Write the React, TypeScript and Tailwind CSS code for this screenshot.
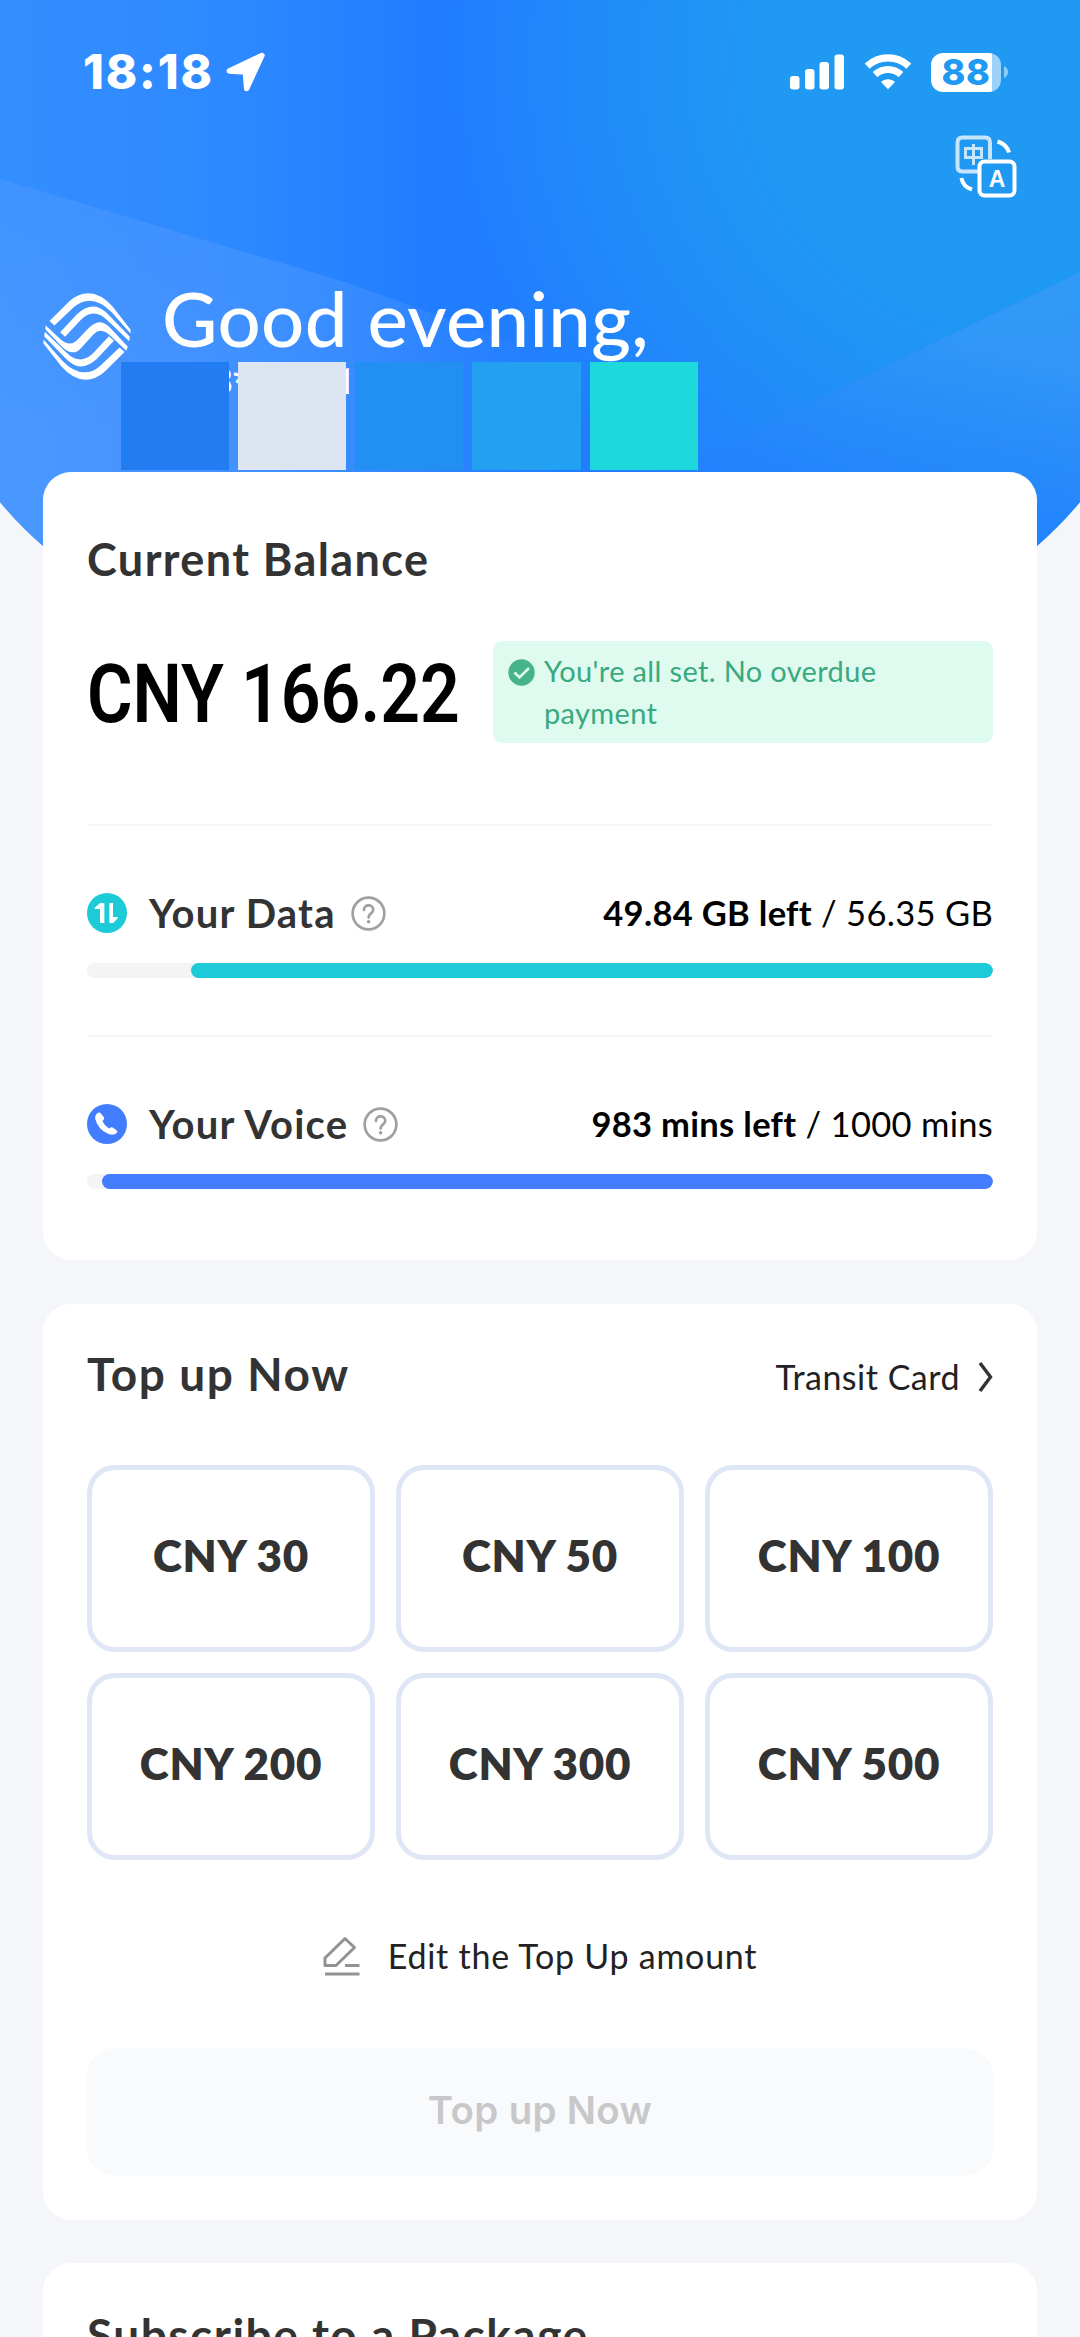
import React from 'react';
import clsx from 'clsx';

const swatches = ['bg-[#237df2]', 'bg-[#dce5f1]', 'bg-[#228ff2]', 'bg-[#22a1f2]', 'bg-[#1ed9db]'];

const amounts = [30, 50, 100, 200, 300, 500];

function HeaderBackground() {
  return (
    <svg className="absolute inset-x-0 top-0" width="1080" height="620" viewBox="0 0 1080 620">
      <defs>
        <linearGradient id="base" x1="0" y1="0" x2="1" y2="0">
          <stop offset="0" stopColor="#338eff" />
          <stop offset="0.22" stopColor="#2d89ff" />
          <stop offset="0.4" stopColor="#207dff" />
          <stop offset="1" stopColor="#247fff" />
        </linearGradient>
        <radialGradient id="glow" gradientUnits="userSpaceOnUse" cx="1010" cy="60" r="570">
          <stop offset="0" stopColor="#2099f3" />
          <stop offset="0.42" stopColor="#2099f3" />
          <stop offset="0.7" stopColor="#2099f3" stopOpacity="0.55" />
          <stop offset="1" stopColor="#2099f3" stopOpacity="0" />
        </radialGradient>
        <linearGradient id="wedgeLeft" gradientUnits="userSpaceOnUse" x1="0" y1="300" x2="560" y2="300">
          <stop offset="0" stopColor="#4a98ff" />
          <stop offset="0.35" stopColor="#4592ff" />
          <stop offset="1" stopColor="#4592ff" stopOpacity="0" />
        </linearGradient>
        <linearGradient id="wedgeShade" gradientUnits="userSpaceOnUse" x1="0" y1="170" x2="0" y2="430">
          <stop offset="0" stopColor="#338eff" stopOpacity="0.9" />
          <stop offset="1" stopColor="#338eff" stopOpacity="0" />
        </linearGradient>
        <linearGradient id="wedgeRight" gradientUnits="userSpaceOnUse" x1="940" y1="330" x2="900" y2="500">
          <stop offset="0" stopColor="#3a99f8" stopOpacity="0.65" />
          <stop offset="1" stopColor="#2380ff" stopOpacity="0.4" />
        </linearGradient>
        <clipPath id="arc">
          <path d="M0 0H1080V502Q1062 524 1037 546Q800 620 540 620Q280 620 43 546Q18 524 0 502Z" />
        </clipPath>
      </defs>
      <g clipPath="url(#arc)">
        <rect width="1080" height="620" fill="url(#base)" />
        <rect width="1080" height="620" fill="url(#glow)" />
        <path d="M0 179L345 282L600 374V620H0Z" fill="url(#wedgeLeft)" />
        <path d="M0 179L345 282L345 430H0Z" fill="url(#wedgeShade)" opacity="0.5" />
        <path d="M1080 272L700 457V620H1080Z" fill="url(#wedgeRight)" />
      </g>
    </svg>
  );
}

function LocationArrow() {
  return (
    <svg width="40" height="40" viewBox="466 68 120 120" fill="#fff" stroke="#fff" strokeWidth="16" strokeLinejoin="round">
      <path d="M574 78L476 125L524 128L528 178Z" />
    </svg>
  );
}

function Signal() {
  return (
    <svg width="54" height="36" viewBox="0 0 54 36" fill="#fff">
      <rect x="0" y="22" width="9.5" height="13.5" rx="3" />
      <rect x="15" y="15" width="9.5" height="20.5" rx="3" />
      <rect x="29.5" y="8" width="9.5" height="27.5" rx="3" />
      <rect x="44.5" y="0.5" width="9.5" height="35" rx="3" />
    </svg>
  );
}

function Wifi() {
  return (
    <svg width="48" height="36" viewBox="0 0 48 36" fill="none" stroke="#fff">
      <path d="M3.2 12.2C15 1.2 33 1.2 44.8 12.2" strokeWidth="7.2" />
      <path d="M11 20.6C18.5 13.8 29.5 13.8 37 20.6" strokeWidth="7" />
      <path d="M17 28C21 24.2 27 24.2 31 28L24 35.2Z" fill="#fff" stroke="none" />
    </svg>
  );
}

function Battery() {
  return (
    <div className="flex items-center">
      <div className="flex h-[39px] w-[70px] items-center justify-center rounded-[12px] bg-linear-to-r from-white from-[87%] to-white/55 to-[87%] font-['Inter'] text-[36px] leading-[39px] font-extrabold tracking-[0.5px] text-[#2099f3]">
        88
      </div>
      <svg className="ml-[3px]" width="4" height="12" viewBox="0 0 4 12">
        <path d="M0 0Q4 2 4 6Q4 10 0 12Z" fill="#fff" opacity="0.5" />
      </svg>
    </div>
  );
}

function TranslateIcon() {
  return (
    <svg width="62" height="64" viewBox="0 0 62 64" fill="none" stroke="#fff" strokeWidth="4">
      <g opacity="0.75">
        <path d="M23 36.5H7.5Q2.5 36.5 2.5 31.5V7.5Q2.5 2.5 7.5 2.5H30Q35 2.5 35 7.5V24" />
        <path d="M10.5 13.5H26.5V22.5H10.5ZM18.5 9V30" strokeWidth="3" />
      </g>
      <rect x="24.5" y="26.5" width="35" height="34" rx="5" />
      <text x="42" y="51.5" textAnchor="middle" fill="#fff" stroke="none" className="font-['Liberation_Sans'] text-[23px] font-bold">
        A
      </text>
      <path d="M42.5 6.5Q51.5 9 54 17.5" />
      <path d="M6.5 43Q8 52 17 54.5" />
    </svg>
  );
}

function Logo() {
  return (
    <svg width="88" height="87" viewBox="39 67 264 262" fill="#fff">
      <path id="outer" d="M58 151L118 92Q145 68 175 68Q212 68 248 108L302 177V189L246 126Q212 90 178 90Q153 90 130 111L73 165Z" />
      <path id="inner" d="M90 185L140 132Q165 108 190 108Q213 108 238 135L300 199L298 212L233 150Q213 129 190 129Q170 130 152 148L105 199Z" />
      <path d="M46 164L92 207Q119 230 141 209L168 181Q190 154 212 155Q228 157 248 179L294 229L289 241L245 199Q214 167 191 191L152 234Q128 260 95 228L46 177Z" />
      <g transform="rotate(180 171 198)">
        <use href="#outer" />
        <use href="#inner" />
      </g>
    </svg>
  );
}

function HelpIcon() {
  return (
    <svg width="35" height="35" viewBox="0 0 34 34" fill="none" stroke="#a0a0a0" strokeWidth="2.6">
      <circle cx="17" cy="17" r="15.4" />
      <path d="M12.6 13.6C12.6 7.6 21.6 7.8 21.6 13.4C21.6 17 17.1 16.8 17.1 21" strokeLinecap="round" />
      <circle cx="17.1" cy="25" r="1.7" fill="#a0a0a0" stroke="none" />
    </svg>
  );
}

function DataIcon() {
  return (
    <svg width="40" height="40" viewBox="0 0 40 40">
      <circle cx="20" cy="20" r="20" fill="#1ccad8" />
      <path d="M13 30V16H8.2Q7 16 7.8 14.8L12.4 10.4Q13 10 14 10H17.4V30ZM22.4 10H26V24H30.2Q31.4 24 30.6 25.4L26.6 29.4Q26 30 25 30H22.4Z" fill="#fff" />
    </svg>
  );
}

function VoiceIcon() {
  return (
    <svg width="40" height="40" viewBox="0 0 40 40">
      <circle cx="20" cy="20" r="20" fill="#427cff" />
      <path d="M11 8.8Q12.6 7.8 14 9.4L17 13.4Q17.8 14.8 16.4 16L15.4 17Q17.4 21.6 22 24.6L23.6 23.6Q25 22.8 26.2 23.8L29.8 26.6Q31 27.8 29.8 29Q26.4 32 21 29.8Q11.4 25.6 8.4 15.4Q7.4 11 11 8.8Z" fill="#fff" />
    </svg>
  );
}

function CheckIcon() {
  return (
    <svg width="27" height="27" viewBox="0 0 27 27">
      <circle cx="13.5" cy="13.5" r="13.2" fill="#47b38b" />
      <path d="M6.5 13.5L11.5 18.5L21 9" fill="none" stroke="#e0fbef" strokeWidth="2.6" />
    </svg>
  );
}

function EditIcon() {
  return (
    <svg width="37" height="40" viewBox="0 0 37 40" fill="none" stroke="#929292" strokeWidth="3">
      <path d="M2 29.5V22L22 2.5L31.5 11.5L13 29.5Z" strokeLinejoin="round" />
      <path d="M22 29.5H36.5M2 38H36.5" strokeWidth="3.2" />
    </svg>
  );
}

interface UsageProps {
  icon: React.ReactNode;
  label: string;
  left: string;
  total: string;
  used: number;
  barClass: string;
}

function Usage({ icon, label, left, total, used, barClass }: UsageProps) {
  return (
    <div className="border-t-2 border-[#f6f6f6] pt-[67px]">
      <div className="flex h-10 items-center">
        {icon}
        <span className="ml-[22px] text-[40px] leading-none font-bold tracking-[1.2px] whitespace-nowrap text-[#333]">{label}</span>
        <span className="ml-[15px]">
          <HelpIcon />
        </span>
        <span className="ml-auto text-[34.5px] leading-none tracking-[0.3px] whitespace-nowrap text-black">
          <b className="font-bold">{left}</b> / {total}
        </span>
      </div>
      <div className="mt-[30px] flex h-[15px] overflow-hidden rounded-full bg-[#f4f4f4]">
        <div className={clsx('ml-auto rounded-full', barClass)} style={{ width: `${100 - used}%` }} />
      </div>
    </div>
  );
}

export default function App() {
  return (
    <div className="h-[2337px] w-[1080px] overflow-hidden bg-[#f4f6fa] font-['Lato',sans-serif]">
      {/* Header */}
      <header className="relative h-[472px]">
        <HeaderBackground />
        <div className="relative pt-[42px]">
          <div className="flex h-[60px] items-center pr-[72px] pl-[83px] text-white">
            <span className="font-['Inter'] text-[47.5px] leading-none font-extrabold tracking-[1.8px]">18:18</span>
            <span className="ml-[12px]">
              <LocationArrow />
            </span>
            <div className="ml-auto flex items-center gap-[19.5px]">
              <Signal />
              <Wifi />
              <Battery />
            </div>
          </div>
          <div className="mt-[33px] flex h-[62px] justify-end pr-[63px]">
            <TranslateIcon />
          </div>
          <div className="mt-[76px] flex pl-[43px] text-white">
            <div className="mt-5">
              <Logo />
            </div>
            <div className="ml-[31px]">
              <h1 className="h-[90px] text-[76px] leading-[90px] font-medium tracking-[0.4px] whitespace-nowrap">Good evening,</h1>
              <p className="ml-[8px] h-[38px] font-['Roboto'] text-[37px] leading-[38px] font-medium">
                138<span className="tracking-[-1.5px]">****</span>111
              </p>
            </div>
          </div>
        </div>
        <div className="absolute top-[362px] left-[120.5px] flex gap-[9px]">
          {swatches.map((color) => (
            <div key={color} className={clsx('size-[108.3px]', color)} />
          ))}
        </div>
      </header>

      <main className="relative flex flex-col gap-[44px] px-[43px]">
        {/* Balance */}
        <section className="h-[788px] rounded-[28px] bg-white px-11 pt-[57px]">
          <h2 className="text-[45px] leading-[60px] font-bold tracking-[1.4px] text-[#333]">Current Balance</h2>
          <div className="mt-[52px] flex h-[102px] items-center justify-between">
            <div className="mt-1 w-[380px] origin-left scale-x-[0.86] font-['Roboto'] text-[81px] leading-none font-semibold whitespace-nowrap text-black">
              CNY 166.22
            </div>
            <div className="flex h-[102px] w-[500px] rounded-[9px] bg-[#dffbef] pt-[9px] pl-[15px]">
              <span className="mt-[9px] mr-[9px]">
                <CheckIcon />
              </span>
              <p className="w-[350px] text-[29px] leading-[42px] tracking-[0.35px] text-[#3aa97f]">You're all set. No overdue payment</p>
            </div>
          </div>
          <div className="mt-[81px] flex flex-col gap-[57px]">
            <Usage
              icon={<DataIcon />}
              label="Your Data"
              left="49.84 GB left"
              total="56.35 GB"
              used={11.5}
              barClass="bg-[#1ccad8]"
            />
            <Usage
              icon={<VoiceIcon />}
              label="Your Voice"
              left="983 mins left"
              total="1000 mins"
              used={1.6}
              barClass="bg-[#427cff]"
            />
          </div>
        </section>

        {/* Top up */}
        <section className="h-[916px] rounded-[28px] bg-white px-11 pt-10">
          <div className="flex h-[60px] items-center justify-between">
            <h2 className="text-[46px] leading-[60px] font-bold tracking-[1.6px] text-[#333]">Top up Now</h2>
            <a className="mt-[6px] flex items-center text-[34px] leading-none tracking-[0.5px] text-[#222]">
              Transit Card
              <svg className="ml-[18px]" width="15" height="30" viewBox="0 0 15 30" fill="none" stroke="#333" strokeWidth="3.4">
                <path d="M2 1L12.5 15L2 29" />
              </svg>
            </a>
          </div>
          <div className="mt-[61px] grid grid-cols-3 gap-[21px]">
            {amounts.map((amount) => (
              <button
                key={amount}
                className="h-[187px] rounded-[28px] border-[5px] border-[#dfe6f5] pb-[7px] text-[44px] font-extrabold tracking-[0.7px] text-[#333]"
              >
                CNY {amount}
              </button>
            ))}
          </div>
          <div className="mt-[76px] flex h-10 items-center justify-center gap-7 text-[34px] leading-none tracking-[0.75px] text-[#222]">
            <EditIcon />
            Edit the Top Up amount
          </div>
          <button className="mt-[72px] block h-32 w-full rounded-[28px] bg-[#f9fafc] pb-[2px] font-['Inter'] text-[38.5px] font-semibold tracking-[0.3px] text-[#c8c8ca]">
            Top up Now
          </button>
        </section>

        {/* Packages */}
        <section className="-mt-px h-[200px] rounded-t-[28px] bg-white px-11 pt-[42px]">
          <h2 className="text-[46px] leading-[60px] font-bold tracking-[1.5px] text-[#333]">Subscribe to a Package</h2>
        </section>
      </main>
    </div>
  );
}
